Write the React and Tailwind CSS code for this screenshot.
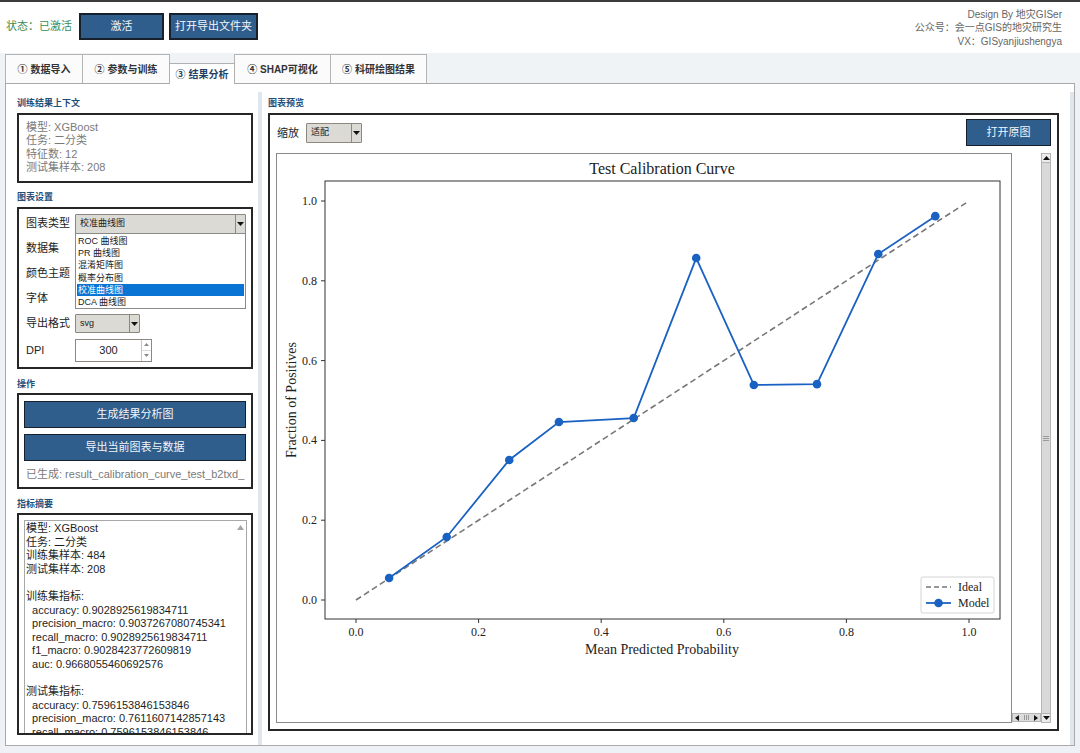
import React from 'react';

const FONT = "font-['Liberation_Sans','Noto_Sans_CJK_SC',sans-serif]";

// calibration points (mean predicted, fraction of positives)
const POINTS = [
  [0.054, 0.055], [0.148, 0.158], [0.25, 0.351], [0.331, 0.446], [0.453, 0.456],
  [0.555, 0.857], [0.649, 0.539], [0.752, 0.541], [0.852, 0.867], [0.945, 0.962],
];
const px = (v) => 356 + v * 613;
const py = (v) => 600 - v * 399;
const TICKS = [0, 0.2, 0.4, 0.6, 0.8, 1.0];

const METRICS = [
  '模型: XGBoost',
  '任务: 二分类',
  '训练集样本: 484',
  '测试集样本: 208',
  '',
  '训练集指标:',
  '  accuracy: 0.9028925619834711',
  '  precision_macro: 0.9037267080745341',
  '  recall_macro: 0.9028925619834711',
  '  f1_macro: 0.9028423772609819',
  '  auc: 0.9668055460692576',
  '',
  '测试集指标:',
  '  accuracy: 0.7596153846153846',
  '  precision_macro: 0.7611607142857143',
  '  recall_macro: 0.7596153846153846',
];

const CHART_TYPES = ['ROC 曲线图', 'PR 曲线图', '混淆矩阵图', '概率分布图', '校准曲线图', 'DCA 曲线图'];

function Arrow({ up, fill = '#111', w = 7, h = 4 }) {
  return (
    <svg width={w} height={h} viewBox="0 0 7 4">
      <path d={up ? 'M0 4 L3.5 0 L7 4 Z' : 'M0 0 L7 0 L3.5 4 Z'} fill={fill} />
    </svg>
  );
}

function Combo({ className, text }) {
  return (
    <div className={`flex bg-[#dcdad5] border border-[#8c887f] rounded-[1px] ${className}`}>
      <div className="flex-1 flex items-center pl-[4px] text-[9px] text-[#222]">{text}</div>
      <div className="w-[10px] border-l border-[#8c887f] flex items-center justify-center">
        <Arrow />
      </div>
    </div>
  );
}

function SectionLabel({ children, className = '' }) {
  return <div className={`text-[9px] font-bold leading-[14px] text-[#1f4e79] ${className}`}>{children}</div>;
}

function FormRow({ label, children, h = 'h-[25px]' }) {
  return (
    <div className={`flex items-center ${h}`}>
      <span className="w-[49px] text-[11px] text-[#222]">{label}</span>
      {children}
    </div>
  );
}

function Tab({ label, w, selected }) {
  if (selected) {
    return (
      <div className={`${w} h-[21px] -ml-px mb-[-1px] relative z-10 bg-white border border-b-0 border-[#b0b0b0] flex items-center justify-center text-[10px] font-bold text-[#1e3f63]`}>
        {label}
      </div>
    );
  }
  return (
    <div className={`${w} h-[29px] -ml-px first:ml-0 bg-[#fbfbfc] border border-b-0 border-[#b4b4b4] flex items-center justify-center text-[10px] font-bold text-[#333]`}>
      {label}
    </div>
  );
}

function Chart() {
  const line = POINTS.map(([x, y]) => `${px(x)},${py(y)}`).join(' ');
  return (
    <svg width="734" height="568" viewBox="277 154 734 568" className="block">
      <g fontFamily="'Liberation Serif', serif" fill="#222">
        <text x="662" y="168" fontSize="16" textAnchor="middle" dominantBaseline="central">Test Calibration Curve</text>
        <rect x="325" y="181" width="675" height="438" fill="none" stroke="#333" strokeWidth="1" />
        {TICKS.map((t) => (
          <g key={'y' + t}>
            <line x1="321" x2="325" y1={py(t)} y2={py(t)} stroke="#333" />
            <text x="317" y={py(t)} fontSize="12" textAnchor="end" dominantBaseline="central">{t.toFixed(1)}</text>
          </g>
        ))}
        {TICKS.map((t) => (
          <g key={'x' + t}>
            <line y1="619" y2="623" x1={px(t)} x2={px(t)} stroke="#333" />
            <text y="632" x={px(t)} fontSize="12" textAnchor="middle" dominantBaseline="central">{t.toFixed(1)}</text>
          </g>
        ))}
        <text x="662" y="649" fontSize="14" textAnchor="middle" dominantBaseline="central">Mean Predicted Probability</text>
        <text x="291" y="400" fontSize="14" textAnchor="middle" dominantBaseline="central" transform="rotate(-90 291 400)">Fraction of Positives</text>

        <line x1={px(0)} y1={py(0)} x2={px(1)} y2={py(1)} stroke="#777" strokeWidth="1.6" strokeDasharray="6 3.5" />
        <polyline points={line} fill="none" stroke="#1a62c2" strokeWidth="1.8" />
        {POINTS.map(([x, y], i) => (
          <circle key={i} cx={px(x)} cy={py(y)} r="4.3" fill="#1a62c2" />
        ))}

        <rect x="921" y="577" width="73" height="36" rx="2" fill="#fff" fillOpacity="0.85" stroke="#d4d4d4" />
        <line x1="926" x2="951" y1="587" y2="587" stroke="#777" strokeWidth="1.6" strokeDasharray="5 3" />
        <text x="958" y="587" fontSize="12" dominantBaseline="central">Ideal</text>
        <line x1="926" x2="951" y1="603" y2="603" stroke="#1a62c2" strokeWidth="1.8" />
        <circle cx="938.5" cy="603" r="4.3" fill="#1a62c2" />
        <text x="958" y="603" fontSize="12" dominantBaseline="central">Model</text>
      </g>
    </svg>
  );
}

export default function App() {
  return (
    <div className={`w-[1080px] h-[753px] overflow-hidden bg-[#eef2f6] border-t-2 border-[#3c3c3c] ${FONT}`}>
      {/* Header */}
      <div className="h-[51px] bg-white flex items-start pl-[6px] pr-[18px]">
        <div className="h-[49px] flex items-center">
          <span className="text-[11px] text-[#3b8c52] mr-[7px]">状态：已激活</span>
          <button className="w-[85px] h-[27px] bg-[#2f5d8c] border-2 border-[#17202b] text-[#f2f5f9] text-[11px]">激活</button>
          <button className="w-[89px] h-[27px] ml-[5px] bg-[#2f5d8c] border-2 border-[#17202b] text-[#f2f5f9] text-[11px]">打开导出文件夹</button>
        </div>
        <div className="ml-auto pt-[6px] text-right text-[10px] leading-[13.3px] text-[#666]">
          <div>Design By 地灾GISer</div>
          <div>公众号：会一点GIS的地灾研究生</div>
          <div>VX：GISyanjiushengya</div>
        </div>
      </div>

      {/* Tabs */}
      <div className="h-[30px] bg-[#f0f3f6] pl-[5px] flex items-end">
        <Tab label="① 数据导入" w="w-[78px]" />
        <Tab label="② 参数与训练" w="w-[88px]" />
        <Tab label="③ 结果分析" w="w-[66px]" selected />
        <Tab label="④ SHAP可视化" w="w-[97px]" />
        <Tab label="⑤ 科研绘图结果" w="w-[97px]" />
      </div>

      {/* Content panel */}
      <div className="mx-[5px] h-[663px] bg-white border border-[#a9a9a9] flex">
        {/* Left column */}
        <div className="w-[252px] h-[651px] pl-[11px] pr-[5px] pt-[12px] flex flex-col overflow-hidden">
          <SectionLabel>训练结果上下文</SectionLabel>
          <div className="mt-[3px] h-[70px] border-2 border-[#262626] pl-[7px] pt-[6px] text-[11px] leading-[13.4px] text-[#7a7a7a]">
            <div>模型: XGBoost</div>
            <div>任务: 二分类</div>
            <div>特征数: 12</div>
            <div>测试集样本: 208</div>
          </div>

          <SectionLabel className="mt-[7px]">图表设置</SectionLabel>
          <div className="relative mt-[3px] h-[162px] border-2 border-[#262626] pl-[7px] pt-[2px]">
            <FormRow label="图表类型">
              <Combo className="w-[171px] h-[20px]" text="校准曲线图" />
            </FormRow>
            <FormRow label="数据集" />
            <FormRow label="颜色主题" />
            <FormRow label="字体" />
            <FormRow label="导出格式">
              <Combo className="w-[65px] h-[19px]" text="svg" />
            </FormRow>
            <FormRow label="DPI" h="h-[28px]">
              <div className="w-[77px] h-[23px] flex bg-white border border-[#8c887f]">
                <div className="flex-1 flex items-center justify-center text-[11px] text-[#222]">300</div>
                <div className="w-[10px] border-l border-[#c9c6bf] flex flex-col">
                  <div className="flex-1 flex items-center justify-center border-b border-[#dedbd5]"><Arrow up fill="#8a8a8a" w={5} h={3} /></div>
                  <div className="flex-1 flex items-center justify-center"><Arrow fill="#8a8a8a" w={5} h={3} /></div>
                </div>
              </div>
            </FormRow>

            {/* open dropdown list */}
            <div className="absolute left-[56px] top-[24px] w-[171px] h-[76px] bg-white border border-[#8a8a8a] pt-[1px] px-[1px]">
              {CHART_TYPES.map((t) => (
                <div
                  key={t}
                  className={`h-[12.2px] leading-[12.2px] pl-[1px] text-[9px] ${t === '校准曲线图' ? 'bg-[#0a74d4] text-white' : 'text-[#222]'}`}
                >
                  {t}
                </div>
              ))}
            </div>
          </div>

          <SectionLabel className="mt-[8px]">操作</SectionLabel>
          <div className="mt-[2px] h-[96px] border-2 border-[#262626] pl-[5px] pt-[6px]">
            <button className="block w-[222px] h-[27px] bg-[#2f5d8c] border border-[#17202b] text-[#f2f5f9] text-[11px]">生成结果分析图</button>
            <button className="block w-[222px] h-[27px] mt-[6px] bg-[#2f5d8c] border border-[#17202b] text-[#f2f5f9] text-[11px]">导出当前图表与数据</button>
            <div className="mt-[6px] pl-[2px] text-[11px] leading-[14px] text-[#7a7a7a] whitespace-nowrap overflow-hidden">
              已生成: result_calibration_curve_test_b2txd_
            </div>
          </div>

          <SectionLabel className="mt-[8px]">指标摘要</SectionLabel>
          <div className="mt-[2px] h-[222px] shrink-0 border-2 border-[#262626] pl-[5px] pt-[5px] overflow-hidden">
            <div className="relative w-[223px] h-[240px] border border-[#a8a8a8] pt-[1px] pl-[1px] overflow-hidden">
              <div className="text-[11px] leading-[13.6px] text-[#1e1e1e] whitespace-pre">
                {METRICS.map((l, i) => (
                  <div key={i} className="h-[13.6px]">{l}</div>
                ))}
              </div>
              <div className="absolute right-0 top-0 bottom-0 w-[12px] bg-white flex justify-center pt-[4px]">
                <svg width="7" height="5" viewBox="0 0 7 5"><path d="M0 5 L3.5 0 L7 5 Z" fill="#a5a5a5" /></svg>
              </div>
            </div>
          </div>
        </div>

        {/* Left sash */}
        <div className="w-[4px] mt-[8px] bg-[#dfe6ee]" />

        {/* Right column */}
        <div className="w-[797px] pl-[6px] pt-[12px] flex flex-col">
          <SectionLabel>图表预览</SectionLabel>
          <div className="mt-[3px] w-[791px] h-[618px] border-2 border-[#262626] flex flex-col">
            <div className="h-[38px] flex items-start pl-[7px] pr-[6px]">
              <div className="mt-[8px] h-[20px] flex items-center">
                <span className="text-[11px] text-[#222] mr-[7px]">缩放</span>
                <Combo className="w-[56px] h-[20px]" text="适配" />
              </div>
              <button className="ml-auto mt-[4px] w-[85px] h-[27px] bg-[#2f5d8c] border border-[#17202b] text-[#f2f5f9] text-[11px]">打开原图</button>
            </div>
            <div className="mx-[6px] h-[570px] flex">
              <div className="w-[765px] h-[570px] flex items-end">
                <div className="w-[736px] h-[570px] border border-[#8a8a8a] bg-white overflow-hidden">
                  <Chart />
                </div>
                <div className="w-[29px] h-[9px] mb-[1px] flex bg-[#dcdcdc] border border-[#b5b5b5]">
                  <div className="w-[8px] flex items-center justify-center"><svg width="4" height="6" viewBox="0 0 4 6"><path d="M4 0 L0 3 L4 6 Z" fill="#111" /></svg></div>
                  <div className="flex-1 flex items-center justify-center gap-[1px]">
                    <span className="w-px h-[5px] bg-[#999]" />
                    <span className="w-px h-[5px] bg-[#999]" />
                    <span className="w-px h-[5px] bg-[#999]" />
                  </div>
                  <div className="w-[8px] flex items-center justify-center"><svg width="4" height="6" viewBox="0 0 4 6"><path d="M0 0 L4 3 L0 6 Z" fill="#111" /></svg></div>
                </div>
              </div>
              <div className="w-[10px] h-[570px] flex flex-col bg-[#d9d9d9] border border-[#b5b5b5]">
                <div className="h-[9px] bg-[#ececec] border-b border-[#b5b5b5] flex items-center justify-center"><Arrow up /></div>
                <div className="flex-1 flex flex-col items-center justify-center gap-[1px]">
                  <span className="w-[6px] h-px bg-[#9a9a9a]" />
                  <span className="w-[6px] h-px bg-[#9a9a9a]" />
                  <span className="w-[6px] h-px bg-[#9a9a9a]" />
                </div>
                <div className="h-[9px] bg-[#ececec] border-t border-[#b5b5b5] flex items-center justify-center"><Arrow /></div>
              </div>
            </div>
          </div>
        </div>

        <div className="w-[11px]" />
        <div className="w-[4px] mt-[8px] bg-[#dfe6ee]" />
      </div>
    </div>
  );
}
